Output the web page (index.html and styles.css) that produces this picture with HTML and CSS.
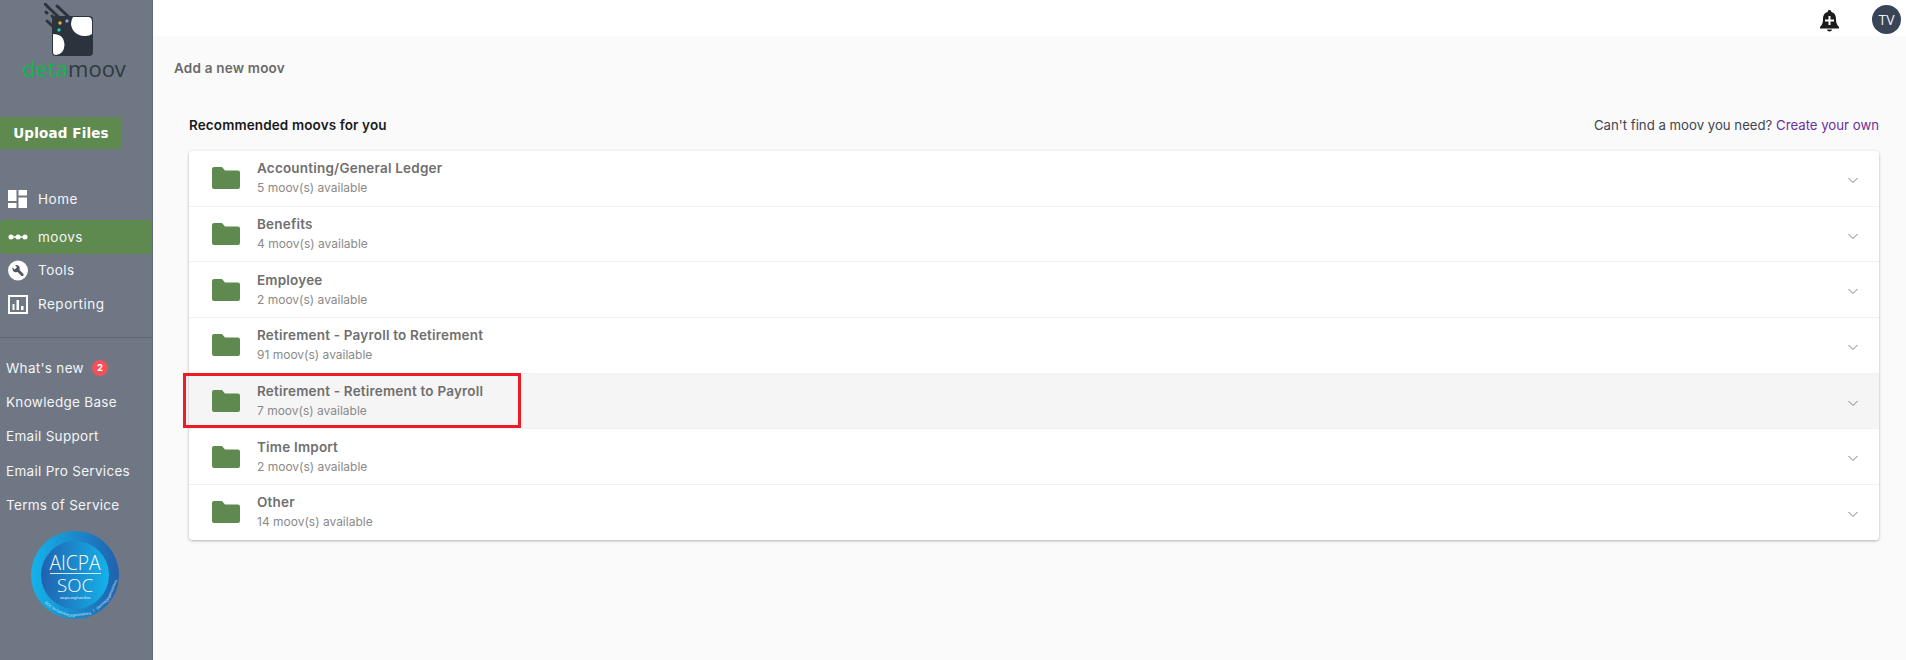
FILE: index.html
```html
<!DOCTYPE html>
<html lang="en">
<head>
<meta charset="utf-8">
<title>Add a new moov</title>
<link rel="stylesheet" href="styles.css">
</head>
<body>
<div class="app">
  <aside class="sidebar">
    <div class="logo">
      <svg class="logo-mark" width="56" height="56" viewBox="0 0 56 56">
        <g stroke="#2b343c" stroke-width="3" stroke-linecap="round">
          <path d="M1 1 L5 5"/><path d="M13 3 L27 16"/><path d="M2 9 L3 10"/><path d="M6 6 L20 19"/><path d="M8 13 L14 19"/><path d="M3 18 L13 27"/>
        </g>
        <rect x="8" y="13" width="41" height="40" rx="4" fill="#2b343c"/>
        <path d="M29 14 H44 Q48 14 48 19 V31 Q45 33.500 40 33 A13 13 0 0 1 27 21 Q27 17 29 14Z" fill="#fff"/>
        <path d="M9 31 Q20 31 20.500 42 Q20 51 12 52 Q9 52 9 49Z" fill="#fff"/>
        <circle cx="16" cy="20" r="1.700" fill="#f0b429"/>
        <circle cx="23" cy="18" r="1.700" fill="#8a9be8"/>
        <circle cx="15" cy="27" r="1.700" fill="#19cfc0"/>
      </svg>
      <div class="logo-text"><span class="logo-deta">deta</span><span class="logo-moov">moov</span></div>
    </div>
    <button class="upload">Upload Files</button>
    <nav class="nav">
      <a class="nav-item">
        <svg class="nav-icon" width="20" height="18" viewBox="0 0 20 18" fill="#fff"><path d="M0 0H8.500V11H0Z"/><path d="M10.500 0H19V5.500H10.500Z"/><path d="M0 13H8.500V18H0Z"/><path d="M10.500 7.500H19V18H10.500Z"/></svg>
        <span>Home</span>
      </a>
      <a class="nav-item active">
        <svg class="nav-icon" width="20" height="18" viewBox="0 0 20 18" fill="#fff"><rect x="1" y="8.300" width="18" height="1.400"/><circle cx="3" cy="9" r="2.500"/><circle cx="10" cy="9" r="2.500"/><circle cx="17" cy="9" r="2.500"/></svg>
        <span>moovs</span>
      </a>
      <a class="nav-item">
        <svg class="nav-icon" width="21" height="21" viewBox="0 0 21 21">
          <circle cx="10.500" cy="10.500" r="10.500" fill="#fff"/>
          <circle cx="8.500" cy="8.500" r="3.800" fill="#4d5563"/>
          <path d="M9.500 9.500 L15 15" stroke="#4d5563" stroke-width="2.800" stroke-linecap="round"/>
          <path d="M4 6.500 L6.500 4 L9.500 7 L7 9.500Z" fill="#fff"/>
        </svg>
        <span>Tools</span>
      </a>
      <a class="nav-item">
        <svg class="nav-icon" width="20" height="19" viewBox="0 0 20 19"><rect x="1" y="1" width="18" height="17" fill="none" stroke="#fff" stroke-width="2"/><path d="M4.500 9H6.500V15H4.500Z M8.500 5H11V15H8.500Z M13 11H15.500V15H13Z" fill="#fff"/></svg>
        <span>Reporting</span>
      </a>
    </nav>
    <div class="links">
      <a class="link">What's new <span class="badge">2</span></a>
      <a class="link">Knowledge Base</a>
      <a class="link">Email Support</a>
      <a class="link">Email Pro Services</a>
      <a class="link">Terms of Service</a>
    </div>
    <svg class="soc" width="88" height="88" viewBox="0 0 88 88">
      <defs>
        <linearGradient id="soc-outer" x1="0" x2="1" y1="0" y2="0"><stop offset="0" stop-color="#14b3ea"/><stop offset="1" stop-color="#2161ae"/></linearGradient>
        <linearGradient id="soc-inner" x1="0" x2="1" y1="0" y2="0"><stop offset="0" stop-color="#2161ae"/><stop offset="1" stop-color="#14b3ea"/></linearGradient>
      </defs>
      <circle cx="44" cy="44" r="44" fill="url(#soc-outer)"/>
      <circle cx="44" cy="44" r="34" fill="url(#soc-inner)"/>
      <text class="soc-big soc-aicpa" x="44" y="39" text-anchor="middle" textLength="51" lengthAdjust="spacingAndGlyphs">AICPA</text>
      <rect x="19" y="42" width="51" height="1" fill="#d6e8f5"/>
      <text class="soc-big soc-name" x="44" y="61" text-anchor="middle" textLength="36" lengthAdjust="spacingAndGlyphs">SOC</text>
      <text class="soc-url" x="44" y="68" text-anchor="middle">aicpa.org/soc4so</text>
      <g class="soc-ring" text-anchor="middle">
        <text transform="translate(44 44) rotate(42) translate(0 41)">SOC</text>
        <text transform="translate(44 44) rotate(31.500) translate(0 41)">for</text>
        <text transform="translate(44 44) rotate(18.500) translate(0 41)">Service</text>
        <text transform="translate(44 44) rotate(-6.500) translate(0 41)">Organizations</text>
        <text transform="translate(44 44) rotate(-28) translate(0 41)">|</text>
        <text transform="translate(44 44) rotate(-41.500) translate(0 41)">Service</text>
        <text transform="translate(44 44) rotate(-66.500) translate(0 41)">Organizations</text>
      </g>
    </svg>
  </aside>
  <div class="content">
    <header class="topbar">
      <svg class="bell" width="19" height="22" viewBox="0 0 19 22"><path d="M9.500 0 A1.800 1.800 0 0 1 11.300 2 C15 3 16 6 16 9 C16 13 17 15 19 17 V18.500 H0 V17 C2 15 3 13 3 9 C3 6 4 3 7.700 2 A1.800 1.800 0 0 1 9.500 0Z M7 19.500 H12 A2.500 2 0 0 1 7 19.500Z" fill="#1c1c1c"/><path d="M8.500 6 H10.500 V9.500 H14 V11.500 H10.500 V15 H8.500 V11.500 H5 V9.500 H8.500Z" fill="#fff"/></svg>
      <div class="avatar">TV</div>
    </header>
    <main class="main">
      <h1 class="page-title">Add a new moov</h1>
      <section class="panel">
        <div class="panel-head">
          <h2 class="panel-title">Recommended moovs for you</h2>
          <p class="panel-note">Can't find a moov you need? <a class="create">Create your own</a></p>
        </div>
        <div class="list">
          <div class="row">
            <svg class="folder" width="28" height="22" viewBox="0 0 28 22"><path d="M2 0H10L13 3.500H26A2 2 0 0 1 28 5.500V20A2 2 0 0 1 26 22H2A2 2 0 0 1 0 20V2A2 2 0 0 1 2 0Z" fill="#5f8a4f"/></svg>
            <div class="row-text"><div class="row-title">Accounting/General Ledger</div><div class="row-sub">5 moov(s) available</div></div>
            <svg class="chev" width="12" height="7" viewBox="0 0 12 7"><path d="M1.500 1L6 5.500L10.500 1" fill="none" stroke="#7b7f86" stroke-width="1"/></svg>
          </div>
          <div class="row">
            <svg class="folder" width="28" height="22" viewBox="0 0 28 22"><path d="M2 0H10L13 3.500H26A2 2 0 0 1 28 5.500V20A2 2 0 0 1 26 22H2A2 2 0 0 1 0 20V2A2 2 0 0 1 2 0Z" fill="#5f8a4f"/></svg>
            <div class="row-text"><div class="row-title">Benefits</div><div class="row-sub">4 moov(s) available</div></div>
            <svg class="chev" width="12" height="7" viewBox="0 0 12 7"><path d="M1.500 1L6 5.500L10.500 1" fill="none" stroke="#7b7f86" stroke-width="1"/></svg>
          </div>
          <div class="row">
            <svg class="folder" width="28" height="22" viewBox="0 0 28 22"><path d="M2 0H10L13 3.500H26A2 2 0 0 1 28 5.500V20A2 2 0 0 1 26 22H2A2 2 0 0 1 0 20V2A2 2 0 0 1 2 0Z" fill="#5f8a4f"/></svg>
            <div class="row-text"><div class="row-title">Employee</div><div class="row-sub">2 moov(s) available</div></div>
            <svg class="chev" width="12" height="7" viewBox="0 0 12 7"><path d="M1.500 1L6 5.500L10.500 1" fill="none" stroke="#7b7f86" stroke-width="1"/></svg>
          </div>
          <div class="row">
            <svg class="folder" width="28" height="22" viewBox="0 0 28 22"><path d="M2 0H10L13 3.500H26A2 2 0 0 1 28 5.500V20A2 2 0 0 1 26 22H2A2 2 0 0 1 0 20V2A2 2 0 0 1 2 0Z" fill="#5f8a4f"/></svg>
            <div class="row-text"><div class="row-title">Retirement - Payroll to Retirement</div><div class="row-sub">91 moov(s) available</div></div>
            <svg class="chev" width="12" height="7" viewBox="0 0 12 7"><path d="M1.500 1L6 5.500L10.500 1" fill="none" stroke="#7b7f86" stroke-width="1"/></svg>
          </div>
          <div class="row hover">
            <div class="callout"></div>
            <svg class="folder" width="28" height="22" viewBox="0 0 28 22"><path d="M2 0H10L13 3.500H26A2 2 0 0 1 28 5.500V20A2 2 0 0 1 26 22H2A2 2 0 0 1 0 20V2A2 2 0 0 1 2 0Z" fill="#5f8a4f"/></svg>
            <div class="row-text"><div class="row-title">Retirement - Retirement to Payroll</div><div class="row-sub">7 moov(s) available</div></div>
            <svg class="chev" width="12" height="7" viewBox="0 0 12 7"><path d="M1.500 1L6 5.500L10.500 1" fill="none" stroke="#7b7f86" stroke-width="1"/></svg>
          </div>
          <div class="row">
            <svg class="folder" width="28" height="22" viewBox="0 0 28 22"><path d="M2 0H10L13 3.500H26A2 2 0 0 1 28 5.500V20A2 2 0 0 1 26 22H2A2 2 0 0 1 0 20V2A2 2 0 0 1 2 0Z" fill="#5f8a4f"/></svg>
            <div class="row-text"><div class="row-title">Time Import</div><div class="row-sub">2 moov(s) available</div></div>
            <svg class="chev" width="12" height="7" viewBox="0 0 12 7"><path d="M1.500 1L6 5.500L10.500 1" fill="none" stroke="#7b7f86" stroke-width="1"/></svg>
          </div>
          <div class="row">
            <svg class="folder" width="28" height="22" viewBox="0 0 28 22"><path d="M2 0H10L13 3.500H26A2 2 0 0 1 28 5.500V20A2 2 0 0 1 26 22H2A2 2 0 0 1 0 20V2A2 2 0 0 1 2 0Z" fill="#5f8a4f"/></svg>
            <div class="row-text"><div class="row-title">Other</div><div class="row-sub">14 moov(s) available</div></div>
            <svg class="chev" width="12" height="7" viewBox="0 0 12 7"><path d="M1.500 1L6 5.500L10.500 1" fill="none" stroke="#7b7f86" stroke-width="1"/></svg>
          </div>
        </div>
      </section>
    </main>
  </div>
</div>
</body>
</html>
```
FILE: styles.css
```css
* { box-sizing: border-box; }
html, body { margin: 0; height: 100%; }
body { font-family: Inter, "Open Sans", "Liberation Sans", sans-serif; background: #fafafa; overflow: hidden; }
.app { display: flex; height: 660px; }

.sidebar { width: 153px; flex: none; background: #6f7785; border-right: 1px solid #626a77; color: #f4f5f6; display: flex; flex-direction: column; }
.logo { height: 117px; display: flex; flex-direction: column; align-items: center; padding-top: 3px; }
.logo-mark { margin-right: 8px; display: block; flex: none; }
.logo-text { font-size: 22px; line-height: 22px; letter-spacing: 0; font-weight: 400; font-family: "Open Sans", sans-serif; margin: -2px 0 0 -4px; }
.logo-deta { color: #0cb849; }
.logo-moov { color: #30393f; }
.upload { width: 122px; height: 32px; background: #5f8a4f; border: 0; border-radius: 0 4px 4px 0; color: #fff; font-family: "DejaVu Sans", sans-serif; font-weight: 700; font-size: 13.500px; letter-spacing: 0.150px; padding: 0; flex: none; }
.nav { display: flex; flex-direction: column; margin-top: 33px; padding-bottom: 16px; border-bottom: 1px solid #626a77; }
.nav-item { height: 34px; display: flex; align-items: center; gap: 10px; padding-left: 8px; font-size: 13.500px; letter-spacing: 0.500px; }
.nav-item.active { background: #5f8a4f; border-radius: 3px; margin: 4px 0 -1px; }
.nav-icon { flex: none; width: 20px; }
.links { display: flex; flex-direction: column; padding-top: 12.500px; }
.link { height: 34.300px; display: flex; align-items: center; gap: 4px; padding-left: 6px; font-size: 13.500px; letter-spacing: 0.300px; white-space: pre; }
.badge { width: 16px; height: 16px; border-radius: 50%; background: #f4505c; color: #fff; font-size: 9.500px; font-weight: 700; display: flex; align-items: center; justify-content: center; letter-spacing: 0; }
.soc { display: block; flex: none; margin: 9px 0 0 31px; }
.soc-big { fill: #fff; font-family: "Open Sans", sans-serif; font-weight: 300; }
.soc-aicpa { font-size: 20px; }
.soc-name { font-size: 19px; }
.soc-url { fill: #e8f4fb; font-family: "Liberation Sans", sans-serif; font-size: 4px; }
.soc-ring { fill: #d6ecf8; font-family: "Liberation Sans", sans-serif; font-size: 3.800px; }

.content { flex: 1; display: flex; flex-direction: column; min-width: 0; }
.topbar { height: 36px; background: #fff; display: flex; align-items: center; justify-content: flex-end; padding: 3px 5px 0 0; gap: 33px; flex: none; }
.bell { display: block; margin-top: 2px; }
.avatar { width: 29px; height: 29px; border-radius: 50%; background: #394456; color: #eef0f3; font-size: 14px; display: flex; align-items: center; justify-content: center; font-family: "Open Sans", sans-serif; }

.main { flex: 1; padding: 23px 27px 0 21px; }
.page-title { margin: 0; font-size: 13.500px; line-height: 18px; font-weight: 600; letter-spacing: 0.200px; color: #6a6a6a; }
.panel { margin: 38px 0 0 15px; }
.panel-head { display: flex; justify-content: space-between; align-items: center; height: 20px; margin-bottom: 16px; }
.panel-title { margin: 0; font-size: 13.500px; line-height: 18px; font-weight: 600; letter-spacing: 0.120px; color: #1a1a1a; }
.panel-note { margin: 0; font-size: 13.200px; color: #3f4450; }
.create { color: #6b2fa0; }
.list { border-radius: 4px; box-shadow: 0 1px 3px rgba(0,0,0,0.3); background: #f1f1f1; display: flex; flex-direction: column; gap: 1px; }
.row { height: 54.700px; background: #fff; display: flex; align-items: center; padding: 0 20px 0 23px; position: relative; }
.row:first-child { border-radius: 4px 4px 0 0; }
.row:last-child { border-radius: 0 0 4px 4px; }
.row.hover { background: #f5f5f5; }
.folder { flex: none; }
.row-text { flex: 1; margin-left: 17px; }
.row-title { font-size: 13.500px; line-height: 18px; font-weight: 600; letter-spacing: 0.200px; color: #6f6f6f; }
.row-sub { font-size: 12px; line-height: 18px; margin-top: 2px; color: #8a8a8a; }
.chev { flex: none; margin-top: 4px; }
.callout { position: absolute; left: -6px; top: -1px; width: 338px; height: 55px; border: 3px solid #ed1c24; pointer-events: none; }
```
